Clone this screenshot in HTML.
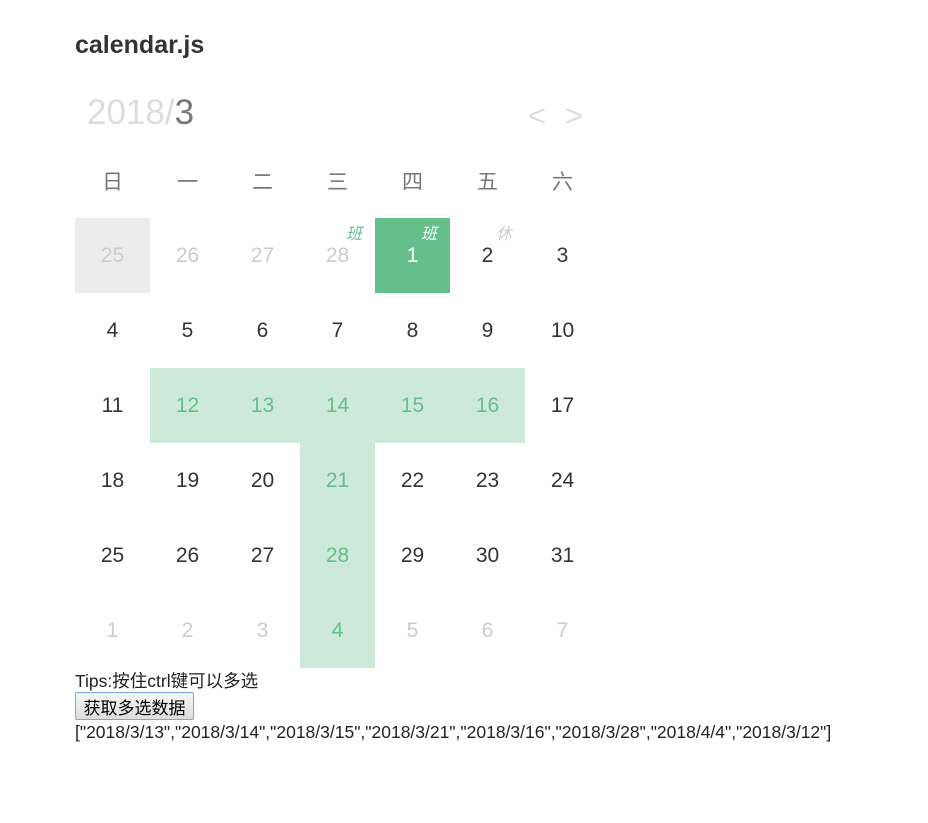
<!DOCTYPE html>
<html><head><meta charset="utf-8"><style>
body{margin:0;background:#fff;font-family:"Liberation Sans","Noto Sans CJK SC",sans-serif;}
.t{position:absolute;left:75px;top:31px;font-size:25px;font-weight:bold;color:#333;}
.ym{position:absolute;left:87px;top:93px;font-size:35px;color:#ddd;}
.ym b{font-weight:normal;color:#777;}
.nav{position:absolute;top:98px;font-size:31px;color:#ddd;}
.cell{position:absolute;width:75px;height:75px;line-height:75px;text-align:center;font-size:21px;color:#333;}
.wk{position:absolute;top:164px;width:75px;text-align:center;font-size:21px;color:#777;line-height:38px;}
.o{color:#ccc}.s{background:#cce9d9;color:#65bf8a}.td{background:#65bf8a;color:#fff}.g{background:#ececec}
.m{position:absolute;font-size:16px;font-style:italic;line-height:16px;}
.bot{position:absolute;left:75px;font-size:17.5px;color:#222;line-height:20px;}
button{position:absolute;left:75px;top:692px;width:119px;height:28px;font-size:17px;font-family:inherit;border:1px solid #7aa7e0;border-radius:2px;background:linear-gradient(#f6f6f6,#ddd);padding:0;}
</style></head><body>
<div class="t">calendar.js</div>
<div class="ym">2018/<b>3</b></div>
<div class="nav" style="left:528px">&lt;</div><div class="nav" style="left:565px">&gt;</div>
<div id="g"></div>
<div class="bot" style="top:671px">Tips:按住ctrl键可以多选</div>
<button>获取多选数据</button>
<div class="bot" style="top:722px">["2018/3/13","2018/3/14","2018/3/15","2018/3/21","2018/3/16","2018/3/28","2018/4/4","2018/3/12"]</div>
<script>
var w=['日','一','二','三','四','五','六'],h='';
w.forEach(function(c,i){h+='<div class="wk" style="left:'+(75+i*75)+'px">'+c+'</div>';});
var d=[[25,26,27,28,1,2,3],[4,5,6,7,8,9,10],[11,12,13,14,15,16,17],[18,19,20,21,22,23,24],[25,26,27,28,29,30,31],[1,2,3,4,5,6,7]];
var sel={'2,1':1,'2,2':1,'2,3':1,'2,4':1,'2,5':1,'3,3':1,'4,3':1,'5,3':1};
d.forEach(function(r,ri){r.forEach(function(n,ci){var c='cell';
if((ri==0&&ci<4)||ri==5)c+=' o';if(sel[ri+','+ci])c+=' s';if(ri==0&&ci==4)c+=' td';if(ri==0&&ci==0)c+=' g';
h+='<div class="'+c+'" style="left:'+(75+ci*75)+'px;top:'+(218+ri*75)+'px">'+n+'</div>';});});
h+='<div class="m" style="left:346px;top:227px;color:#65bf8a">班</div>';
h+='<div class="m" style="left:421px;top:227px;color:#fff">班</div>';
h+='<div class="m" style="left:496px;top:227px;color:#ccc">休</div>';
document.getElementById('g').innerHTML=h;
</script>
</body></html>
